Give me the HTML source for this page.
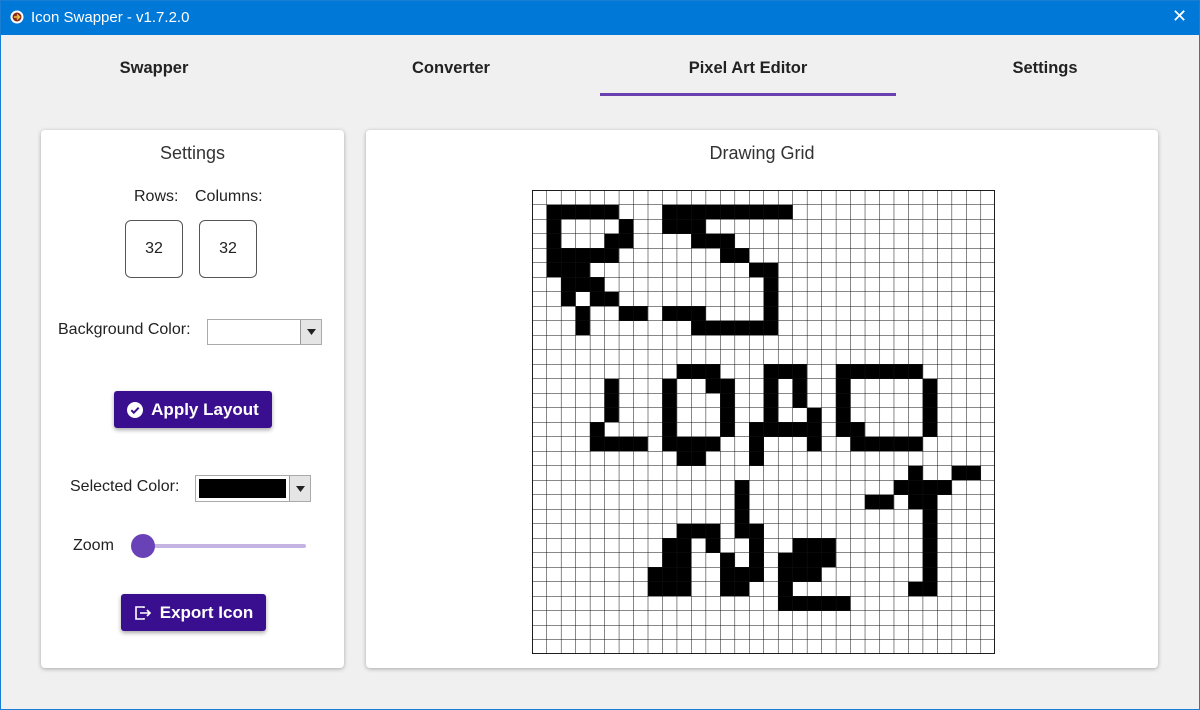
<!DOCTYPE html>
<html><head><meta charset="utf-8"><style>
*{box-sizing:border-box;margin:0;padding:0}
body{width:1200px;height:710px;background:#f0f0f0;font-family:"Liberation Sans",sans-serif;color:#222;position:relative;overflow:hidden}
.a{position:absolute}
.title{left:0;top:0;width:1200px;height:35px;background:#0078d7;color:#fff;font-size:15px}
.tab{top:59px;font-size:16.5px;font-weight:bold;color:#222;text-align:center;width:200px}
.card{background:#fff;border-radius:4px;box-shadow:0 1px 4px rgba(0,0,0,.3)}
.lbl{font-size:16px;color:#222}
.btn{background:#3a0f8f;color:#fff;border-radius:3px;font-size:17px;font-weight:bold;box-shadow:0 2px 4px rgba(0,0,0,.35);display:flex;align-items:center;justify-content:center;gap:8px}
.num{border:1px solid #555;border-radius:6px;font-size:16px;text-align:center;line-height:56px}
.combo{border:1px solid #aaa;background:#fff}
.dd{position:absolute;right:0;top:0;bottom:0;width:21px;background:#e5e5e5;border-left:1px solid #999;display:flex;align-items:center;justify-content:center}
</style></head><body>
<div class="a title">
 <svg class="a" style="left:10px;top:10px" width="14" height="14" viewBox="0 0 14 14"><circle cx="7" cy="7" r="6.5" fill="#fff"/><circle cx="7" cy="7" r="4.5" fill="#8a2a1a"/><path d="M4 7h6M7 4.5l2.5 2.5L7 9.5" stroke="#f0c040" stroke-width="1.5" fill="none"/></svg>
 <div class="a" style="left:31px;top:9px">Icon Swapper - v1.7.2.0</div>
 <div class="a" style="left:1172px;top:6px;font-size:18px;font-weight:normal">✕</div>
</div>
<div class="a tab" style="left:54px">Swapper</div>
<div class="a tab" style="left:351px">Converter</div>
<div class="a tab" style="left:648px">Pixel Art Editor</div>
<div class="a tab" style="left:945px">Settings</div>
<div class="a" style="left:600px;top:93px;width:296px;height:3px;background:#6a3fb0"></div>

<div class="a card" style="left:41px;top:130px;width:303px;height:538px"></div>
<div class="a lbl" style="left:41px;top:143px;width:303px;text-align:center;font-size:18px;color:#333">Settings</div>
<div class="a lbl" style="left:134px;top:188px">Rows:</div>
<div class="a lbl" style="left:195px;top:188px">Columns:</div>
<div class="a num" style="left:125px;top:220px;width:58px;height:58px">32</div>
<div class="a num" style="left:199px;top:220px;width:58px;height:58px">32</div>
<div class="a lbl" style="left:58px;top:321px">Background Color:</div>
<div class="a combo" style="left:207px;top:319px;width:115px;height:26px"><div class="dd"><svg width="9" height="6"><path d="M0 0h9L4.5 6z" fill="#222"/></svg></div></div>
<div class="a btn" style="left:114px;top:391px;width:158px;height:37px"><svg width="16" height="16" viewBox="0 0 16 16"><circle cx="8" cy="8" r="8" fill="#fff"/><path d="M4.3 8.2l2.5 2.5 4.9-5" stroke="#3a0f8f" stroke-width="2" fill="none"/></svg>Apply Layout</div>
<div class="a lbl" style="left:70px;top:478px">Selected Color:</div>
<div class="a combo" style="left:195px;top:475px;width:116px;height:27px"><div class="a" style="left:3px;top:3px;width:87px;height:19px;background:#000"></div><div class="dd"><svg width="9" height="6"><path d="M0 0h9L4.5 6z" fill="#222"/></svg></div></div>
<div class="a lbl" style="left:73px;top:537px">Zoom</div>
<div class="a" style="left:150px;top:544px;width:156px;height:4px;background:#c5b3e3;border-radius:2px"></div>
<div class="a" style="left:131px;top:534px;width:24px;height:24px;border-radius:50%;background:#6a42b8"></div>
<div class="a btn" style="left:121px;top:594px;width:145px;height:37px"><svg width="18" height="16" viewBox="0 0 18 16"><path d="M10 3V2H2v12h8v-1" stroke="#fff" stroke-width="1.6" fill="none"/><path d="M6 8h10M13 5l3 3-3 3" stroke="#fff" stroke-width="1.6" fill="none"/></svg>Export Icon</div>

<div class="a card" style="left:366px;top:130px;width:792px;height:538px"></div>
<div class="a lbl" style="left:366px;top:143px;width:792px;text-align:center;font-size:18px;color:#333">Drawing Grid</div>
<svg class="a" style="left:532px;top:190px" width="463" height="464" viewBox="0 0 32 32" preserveAspectRatio="none">
<defs><pattern id="g" width="1" height="1" patternUnits="userSpaceOnUse"><path d="M0 0V1M0 0H1" stroke="#111" stroke-width="0.07" fill="none"/></pattern></defs>
<rect width="32" height="32" fill="#fff"/>
<path fill="#000" d="
M1 1h5v1h-5zM9 1h9v1h-9z
M1 2h1v1h-1zM6 2h1v1h-1zM9 2h3v1h-3z
M1 3h1v1h-1zM5 3h2v1h-2zM11 3h3v1h-3z
M1 4h5v1h-5zM13 4h2v1h-2z
M1 5h3v1h-3zM15 5h2v1h-2z
M2 6h3v1h-3zM16 6h1v1h-1z
M2 7h1v1h-1zM4 7h2v1h-2zM16 7h1v1h-1z
M3 8h1v1h-1zM6 8h2v1h-2zM9 8h3v1h-3zM16 8h1v1h-1z
M3 9h1v1h-1zM11 9h6v1h-6z
M10 12h3v1h-3zM16 12h3v1h-3zM21 12h6v1h-6z
M5 13h1v1h-1zM9 13h1v1h-1zM12 13h2v1h-2zM16 13h1v1h-1zM18 13h1v1h-1zM21 13h1v1h-1zM27 13h1v1h-1z
M5 14h1v1h-1zM9 14h1v1h-1zM13 14h1v1h-1zM16 14h1v1h-1zM18 14h1v1h-1zM21 14h1v1h-1zM27 14h1v1h-1z
M5 15h1v1h-1zM9 15h1v1h-1zM13 15h1v1h-1zM16 15h1v1h-1zM19 15h1v1h-1zM21 15h1v1h-1zM27 15h1v1h-1z
M4 16h1v1h-1zM9 16h1v1h-1zM13 16h1v1h-1zM15 16h5v1h-5zM21 16h2v1h-2zM27 16h1v1h-1z
M4 17h4v1h-4zM9 17h4v1h-4zM15 17h1v1h-1zM19 17h1v1h-1zM22 17h5v1h-5z
M10 18h2v1h-2zM15 18h1v1h-1z
M26 19h1v1h-1zM29 19h2v1h-2z
M14 20h1v1h-1zM25 20h4v1h-4z
M14 21h1v1h-1zM23 21h2v1h-2zM26 21h2v1h-2z
M14 22h1v1h-1zM27 22h1v1h-1z
M10 23h3v1h-3zM14 23h2v1h-2zM27 23h1v1h-1z
M9 24h2v1h-2zM12 24h1v1h-1zM15 24h1v1h-1zM18 24h3v1h-3zM27 24h1v1h-1z
M9 25h2v1h-2zM13 25h1v1h-1zM15 25h1v1h-1zM17 25h4v1h-4zM27 25h1v1h-1z
M8 26h3v1h-3zM13 26h3v1h-3zM17 26h3v1h-3zM27 26h1v1h-1z
M8 27h3v1h-3zM13 27h2v1h-2zM17 27h1v1h-1zM26 27h2v1h-2z
M17 28h5v1h-5z"/>
<rect width="32" height="32" fill="url(#g)"/>
<rect x="0.03" y="0.03" width="31.94" height="31.94" fill="none" stroke="#111" stroke-width="0.07"/>
</svg>
<div class="a" style="left:0;top:0;width:1200px;height:710px;border:1px solid #1a7fd4;pointer-events:none"></div>
</body></html>
